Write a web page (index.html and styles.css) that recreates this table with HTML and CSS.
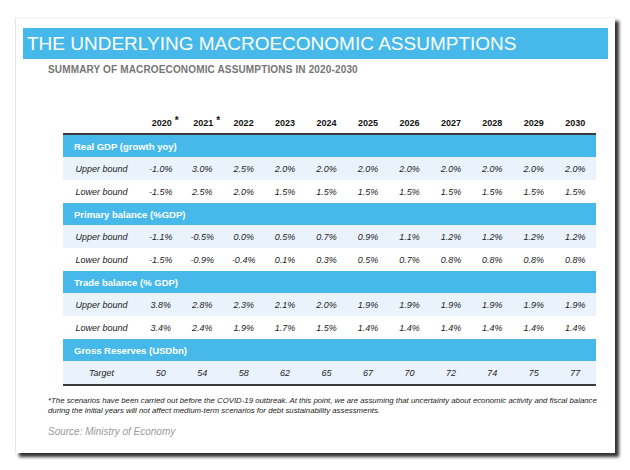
FILE: index.html
```html
<!DOCTYPE html>
<html>
<head>
<meta charset="utf-8">
<link rel="stylesheet" href="styles.css">
</head>
<body>
<div class="card">
  <div class="title">THE UNDERLYING MACROECONOMIC ASSUMPTIONS</div>
  <div class="subtitle">SUMMARY OF MACROECONOMIC ASSUMPTIONS IN 2020-2030</div>
  <table class="data">
    <colgroup>
      <col class="c-label">
      <col><col><col><col><col><col><col><col><col><col><col>
    </colgroup>
    <thead>
      <tr>
        <th></th>
        <th>2020<sup>*</sup></th><th>2021<sup>*</sup></th><th>2022</th><th>2023</th><th>2024</th><th>2025</th><th>2026</th><th>2027</th><th>2028</th><th>2029</th><th>2030</th>
      </tr>
    </thead>
    <tbody>
      <tr class="sec"><td colspan="12">Real GDP (growth yoy)</td></tr>
      <tr class="alt"><td>Upper bound</td><td>-1.0%</td><td>3.0%</td><td>2.5%</td><td>2.0%</td><td>2.0%</td><td>2.0%</td><td>2.0%</td><td>2.0%</td><td>2.0%</td><td>2.0%</td><td>2.0%</td></tr>
      <tr><td>Lower bound</td><td>-1.5%</td><td>2.5%</td><td>2.0%</td><td>1.5%</td><td>1.5%</td><td>1.5%</td><td>1.5%</td><td>1.5%</td><td>1.5%</td><td>1.5%</td><td>1.5%</td></tr>
      <tr class="sec"><td colspan="12">Primary balance (%GDP)</td></tr>
      <tr class="alt"><td>Upper bound</td><td>-1.1%</td><td>-0.5%</td><td>0.0%</td><td>0.5%</td><td>0.7%</td><td>0.9%</td><td>1.1%</td><td>1.2%</td><td>1.2%</td><td>1.2%</td><td>1.2%</td></tr>
      <tr><td>Lower bound</td><td>-1.5%</td><td>-0.9%</td><td>-0.4%</td><td>0.1%</td><td>0.3%</td><td>0.5%</td><td>0.7%</td><td>0.8%</td><td>0.8%</td><td>0.8%</td><td>0.8%</td></tr>
      <tr class="sec"><td colspan="12">Trade balance (% GDP)</td></tr>
      <tr class="alt"><td>Upper bound</td><td>3.8%</td><td>2.8%</td><td>2.3%</td><td>2.1%</td><td>2.0%</td><td>1.9%</td><td>1.9%</td><td>1.9%</td><td>1.9%</td><td>1.9%</td><td>1.9%</td></tr>
      <tr><td>Lower bound</td><td>3.4%</td><td>2.4%</td><td>1.9%</td><td>1.7%</td><td>1.5%</td><td>1.4%</td><td>1.4%</td><td>1.4%</td><td>1.4%</td><td>1.4%</td><td>1.4%</td></tr>
      <tr class="sec"><td colspan="12">Gross Reserves (USDbn)</td></tr>
      <tr class="alt last"><td>Target</td><td>50</td><td>54</td><td>58</td><td>62</td><td>65</td><td>67</td><td>70</td><td>72</td><td>74</td><td>75</td><td>77</td></tr>
    </tbody>
  </table>
  <p class="note">*The scenarios have been carried out before the COVID-19 outbreak. At this point, we are assuming that uncertainty about economic activity and fiscal balance during the initial years will not affect medium-term scenarios for debt sustainability assessments.</p>
  <p class="source">Source: Ministry of Economy</p>
</div>
</body>
</html>
```

FILE: styles.css
```css
html, body {
  margin: 0;
  padding: 0;
  background: #ffffff;
}

body {
  font-family: "Liberation Sans", Arial, sans-serif;
  padding-top: 17px;
  padding-bottom: 17px;
}

.card {
  box-sizing: border-box;
  margin: 0 0 0 15px;
  width: 600px;
  height: 436px;
  padding: 10px 7px 0 7px;
  background: #ffffff;
  border-left: 1px solid #e6e6e6;
  border-top: 1px solid #f2f2f2;
  box-shadow: 4px 4px 3px rgba(0, 0, 0, 0.8);
}

.title {
  height: 31px;
  line-height: 31px;
  background: #46b9ea;
  color: #ffffff;
  font-size: 19px;
  padding-left: 4px;
  white-space: nowrap;
}

.subtitle {
  margin: 5px 0 0 25px;
  font-size: 10px;
  line-height: 12px;
  font-weight: bold;
  letter-spacing: 0.15px;
  color: #757575;
}

.data {
  margin: 32px 0 0 40px;
  width: 533px;
  border-collapse: collapse;
  table-layout: fixed;
  font-size: 9px;
  color: #222222;
}

.c-label {
  width: 77px;
}

.data th {
  height: 20px;
  font-weight: bold;
  text-align: center;
  vertical-align: bottom;
  padding: 0 0 5px 0;
  border-bottom: 2px solid #3a3a3a;
  color: #111111;
}

.data th sup {
  font-size: 10px;
  position: relative;
  top: -2px;
  margin-left: 3px;
  margin-right: -9px;
  vertical-align: top;
  line-height: 9px;
}

.data td {
  height: 23px;
  padding: 0;
  text-align: center;
  font-style: italic;
}

.data tbody tr:first-child td {
  border-top: 1px solid #ffffff;
}

.data tr.sec td {
  background: #46b9ea;
  color: #ffffff;
  font-weight: bold;
  font-style: normal;
  font-size: 9.5px;
  text-align: left;
  padding-left: 11px;
  height: 22px;
}

.data tr.alt td {
  background: #eaf3fc;
}

.data tr.last td {
  border-bottom: 2px solid #3a3a3a;
}

.note {
  margin: 10px 0 0 25px;
  width: 560px;
  font-size: 7.8px;
  line-height: 10px;
  font-style: italic;
  color: #222222;
}

.source {
  margin: 10px 0 0 25px;
  font-size: 10px;
  font-style: italic;
  color: #9a9a9a;
}
```
